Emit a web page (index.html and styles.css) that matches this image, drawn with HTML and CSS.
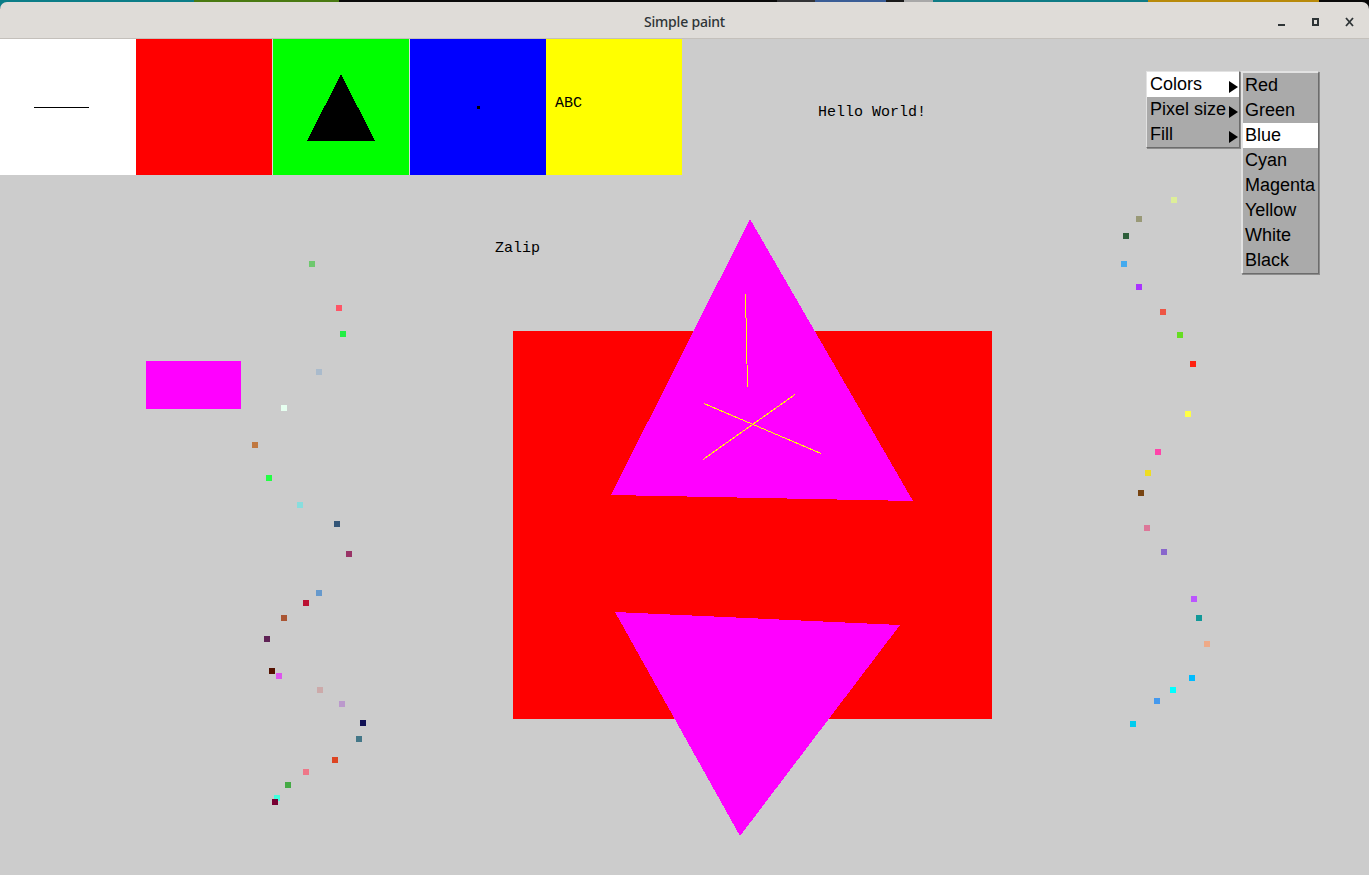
FILE: index.html
```html
<!DOCTYPE html>
<html>
<head>
<meta charset="utf-8">
<title>Simple paint</title>
<link rel="stylesheet" href="styles.css">
</head>
<body>
<div class="desk-strip">
  <span class="seg s-teal1"></span>
  <span class="seg s-green"></span>
  <span class="seg s-black1"></span>
  <span class="seg s-dark"></span>
  <span class="seg s-blue"></span>
  <span class="seg s-dark2"></span>
  <span class="seg s-gray"></span>
  <span class="seg s-teal2"></span>
  <span class="seg s-gold"></span>
  <span class="seg s-black2"></span>
</div>
<div class="window">
  <header class="titlebar">
    <div class="tb-left"></div>
    <div class="title">Simple paint</div>
    <div class="controls">
      <span class="ctl"><svg width="10" height="10" viewBox="0 0 10 10"><rect x="1" y="7" width="7" height="2" fill="#2e3436"/></svg></span>
      <span class="ctl"><svg width="10" height="10" viewBox="0 0 10 10"><rect x="2" y="2" width="5" height="6" fill="none" stroke="#2e3436" stroke-width="2"/></svg></span>
      <span class="ctl"><svg width="12" height="12" viewBox="0 0 12 12"><path d="M2 2 L9 10 M9 2 L2 10" stroke="#2e3436" stroke-width="1.8" fill="none"/></svg></span>
    </div>
  </header>
  <main class="canvas">
    <svg class="drawing" width="1369" height="836" viewBox="0 39 1369 836" shape-rendering="crispEdges">
      <rect x="513" y="331" width="479" height="388" fill="#ff0000"/>
      <polygon points="750,219 611,495 913,501" fill="#ff00ff"/>
      <polygon points="615,612 900,625 740,836" fill="#ff00ff"/>
      <line x1="745.5" y1="294" x2="747.5" y2="387" stroke="#ffff00" stroke-width="1"/>
      <line x1="704" y1="403.5" x2="821" y2="453.5" stroke="#ffff00" stroke-width="1"/>
      <line x1="703" y1="459.5" x2="795" y2="394.5" stroke="#ffff00" stroke-width="1"/>
      <rect x="146" y="361" width="95" height="48" fill="#ff00ff"/>
      <text class="fixed" x="818" y="116">Hello World!</text>
      <text class="fixed" x="495" y="252">Zalip</text>
      <g class="dots">
        <rect x="309" y="261" width="6" height="6" fill="#6ec86e"/>
        <rect x="336" y="305" width="6" height="6" fill="#ff5566"/>
        <rect x="340" y="331" width="6" height="6" fill="#22ee44"/>
        <rect x="316" y="369" width="6" height="6" fill="#aabbcc"/>
        <rect x="281" y="405" width="6" height="6" fill="#e6fff0"/>
        <rect x="252" y="442" width="6" height="6" fill="#c07840"/>
        <rect x="266" y="475" width="6" height="6" fill="#22ff44"/>
        <rect x="297" y="502" width="6" height="6" fill="#88dddd"/>
        <rect x="334" y="521" width="6" height="6" fill="#335577"/>
        <rect x="346" y="551" width="6" height="6" fill="#993366"/>
        <rect x="316" y="590" width="6" height="6" fill="#6699cc"/>
        <rect x="303" y="600" width="6" height="6" fill="#bb1133"/>
        <rect x="281" y="615" width="6" height="6" fill="#aa5533"/>
        <rect x="264" y="636" width="6" height="6" fill="#5f2255"/>
        <rect x="269" y="668" width="6" height="6" fill="#551100"/>
        <rect x="276" y="673" width="6" height="6" fill="#dd55ee"/>
        <rect x="317" y="687" width="6" height="6" fill="#ccaaaa"/>
        <rect x="339" y="701" width="6" height="6" fill="#bb99cc"/>
        <rect x="360" y="720" width="6" height="6" fill="#111155"/>
        <rect x="356" y="736" width="6" height="6" fill="#447788"/>
        <rect x="332" y="757" width="6" height="6" fill="#dd4422"/>
        <rect x="303" y="769" width="6" height="6" fill="#ee7788"/>
        <rect x="285" y="782" width="6" height="6" fill="#44aa44"/>
        <rect x="274" y="795" width="6" height="6" fill="#44ffdd"/>
        <rect x="272" y="799" width="6" height="6" fill="#770033"/>

        <rect x="1171" y="197" width="6" height="6" fill="#ddee99"/>
        <rect x="1136" y="216" width="6" height="6" fill="#999977"/>
        <rect x="1123" y="233" width="6" height="6" fill="#2d5e3a"/>
        <rect x="1121" y="261" width="6" height="6" fill="#44aaee"/>
        <rect x="1136" y="284" width="6" height="6" fill="#aa33ff"/>
        <rect x="1160" y="309" width="6" height="6" fill="#ee5544"/>
        <rect x="1177" y="332" width="6" height="6" fill="#66dd22"/>
        <rect x="1190" y="361" width="6" height="6" fill="#ff2211"/>
        <rect x="1185" y="411" width="6" height="6" fill="#ffff44"/>
        <rect x="1155" y="449" width="6" height="6" fill="#ff44aa"/>
        <rect x="1145" y="470" width="6" height="6" fill="#eedd22"/>
        <rect x="1138" y="490" width="6" height="6" fill="#774411"/>
        <rect x="1144" y="525" width="6" height="6" fill="#dd7799"/>
        <rect x="1161" y="549" width="6" height="6" fill="#8866cc"/>
        <rect x="1191" y="596" width="6" height="6" fill="#bb55ff"/>
        <rect x="1196" y="615" width="6" height="6" fill="#119999"/>
        <rect x="1204" y="641" width="6" height="6" fill="#eeaa88"/>
        <rect x="1189" y="675" width="6" height="6" fill="#00bbff"/>
        <rect x="1170" y="687" width="6" height="6" fill="#00ffff"/>
        <rect x="1154" y="698" width="6" height="6" fill="#4499ee"/>
        <rect x="1130" y="721" width="6" height="6" fill="#00ccee"/>
      </g>
    </svg>

    <div class="toolbar">
      <div class="tool tool-white">
        <svg width="136" height="136" viewBox="0 0 136 136" shape-rendering="crispEdges"><rect x="34" y="68" width="55" height="1" fill="#000"/></svg>
      </div>
      <div class="tool tool-red"></div>
      <div class="sep"></div>
      <div class="tool tool-green">
        <svg width="136" height="136" viewBox="0 0 136 136" shape-rendering="crispEdges"><polygon points="68,35 34,102 102,102" fill="#000"/></svg>
      </div>
      <div class="sep"></div>
      <div class="tool tool-blue">
        <svg width="136" height="136" viewBox="0 0 136 136" shape-rendering="crispEdges"><rect x="67" y="67" width="3" height="3" fill="#000"/></svg>
      </div>
      <div class="tool tool-yellow"><span class="abc">ABC</span></div>
    </div>

    <div class="menu">
      <div class="mi active"><span>Colors</span><i class="arrow"></i></div>
      <div class="mi"><span>Pixel size</span><i class="arrow"></i></div>
      <div class="mi"><span>Fill</span><i class="arrow"></i></div>
    </div>
    <div class="submenu">
      <div class="mi">Red</div>
      <div class="mi">Green</div>
      <div class="mi active">Blue</div>
      <div class="mi">Cyan</div>
      <div class="mi">Magenta</div>
      <div class="mi">Yellow</div>
      <div class="mi">White</div>
      <div class="mi">Black</div>
    </div>
  </main>
</div>
</body>
</html>
```

FILE: styles.css
```css
html, body {
  margin: 0;
  padding: 0;
  width: 1369px;
  height: 875px;
  overflow: hidden;
  background: #000;
}

.desk-strip {
  display: flex;
  height: 8px;
}
.seg { display: block; height: 8px; }
.s-teal1 { width: 194px; background: #0b7d87; }
.s-green { width: 145px; background: #4a7a12; }
.s-black1 { width: 438px; background: #0a0a0a; }
.s-dark { width: 38px; background: #333436; }
.s-blue { width: 71px; background: #3a5d96; }
.s-dark2 { width: 18px; background: #1a1a1a; }
.s-gray { width: 29px; background: #a8a8a8; }
.s-teal2 { width: 215px; background: #0f7b85; }
.s-gold { width: 171px; background: #b88a0a; }
.s-black2 { flex: 1; background: #0a0a0a; }

.window {
  margin-top: -6px;
  display: flex;
  flex-direction: column;
}

.titlebar {
  height: 36px;
  background: #dfdcd8;
  border-radius: 7px 7px 0 0;
  border-bottom: 1px solid #c4c0bb;
  display: grid;
  grid-template-columns: 1fr auto 1fr;
  align-items: center;
  font-family: "Noto Sans", "DejaVu Sans", sans-serif;
}
.title {
  font-size: 14px;
  font-weight: 500;
  color: #2e3436;
  letter-spacing: -0.2px;
  padding-top: 1px;
}
.controls {
  justify-self: end;
  display: flex;
  padding-right: 2px;
}
.ctl {
  width: 34px;
  height: 36px;
  display: flex;
  align-items: center;
  justify-content: center;
  padding-top: 2px;
}

.canvas {
  position: relative;
  height: 836px;
  background: #cccccc;
  overflow: hidden;
}

.drawing {
  position: absolute;
  left: 0;
  top: 0;
  display: block;
}

.fixed {
  font-family: "Liberation Mono", "DejaVu Sans Mono", monospace;
  font-size: 15px;
  fill: #000;
}

.toolbar {
  position: relative;
  display: flex;
  width: 682px;
  height: 136px;
}
.tool {
  width: 136px;
  height: 136px;
  flex: none;
}
.tool svg { display: block; }
.sep {
  width: 1px;
  height: 136px;
  background: #dcdcdc;
  flex: none;
}
.tool-white { background: #ffffff; }
.tool-red { background: #ff0000; }
.tool-green { background: #00ff00; width: 136px; }
.tool-blue { background: #0000ff; }
.tool-yellow { background: #ffff00; }
.tool-red + .sep + .tool-green { width: 136px; }
.tool-green + .sep + .tool-blue { width: 136px; }
.tool-white, .tool-red { width: 136px; }

.abc {
  display: block;
  padding: 56px 0 0 9px;
  font-family: "Liberation Mono", "DejaVu Sans Mono", monospace;
  font-size: 15px;
  line-height: 17px;
  color: #000;
}

.menu, .submenu {
  position: absolute;
  background: #aaaaaa;
  font-family: "Liberation Sans", Arial, sans-serif;
  font-size: 18px;
  color: #000;
}
.menu {
  left: 1146px;
  top: 32px;
  width: 92px;
  border-top: 1px solid #e2e2e2;
  border-left: 1px solid #e2e2e2;
  border-right: 1px solid #6c6c6c;
  border-bottom: 1px solid #6c6c6c;
  box-shadow: 1px 1px 0 #8c8c8c;
}
.submenu {
  left: 1241px;
  top: 32px;
  width: 75px;
  border-top: 2px solid #e2e2e2;
  border-left: 2px solid #e2e2e2;
  border-right: 1px solid #6c6c6c;
  border-bottom: 1px solid #6c6c6c;
  box-shadow: 1px 1px 0 #8c8c8c;
}
.mi {
  height: 25px;
  line-height: 25px;
  white-space: nowrap;
}
.menu .mi {
  display: flex;
  align-items: center;
  justify-content: space-between;
  padding: 0 1px 0 3px;
}
.submenu .mi {
  padding-left: 2px;
}
.mi.active { background: #ffffff; }
.arrow {
  display: block;
  width: 0;
  height: 0;
  border-left: 9px solid #000;
  border-top: 6px solid transparent;
  border-bottom: 6px solid transparent;
  margin-top: 4px;
}
```
